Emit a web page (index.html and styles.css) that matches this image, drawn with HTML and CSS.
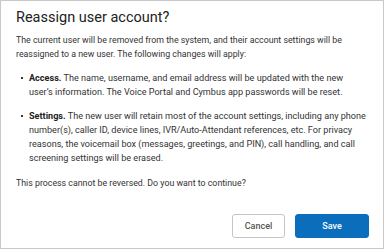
FILE: index.html
```html
<!DOCTYPE html>
<html lang="en">
<head>
    <meta charset="UTF-8">
    <meta name="viewport" content="width=device-width, initial-scale=1.0">
    <title>Reassign user account</title>
    <link rel="stylesheet" href="styles.css">
</head>
<body>
    <div class="dialog">
        <h1>Reassign user account?</h1>
        <p>The current user will be removed from the system, and their account settings will be reassigned to a new user. The following changes will apply:</p>
        <ul class="changes">
            <li><b>Access.</b> The name, username, and email address will be updated with the new user’s information. The Voice Portal and Cymbus app passwords will be reset.</li>
            <li><b>Settings.</b> The new user will retain most of the account settings, including any phone number(s), caller ID, device lines, IVR/Auto-Attendant references, etc. For privacy reasons, the voicemail box (messages, greetings, and PIN), call handling, and call screening settings will be erased.</li>
        </ul>
        <p>This process cannot be reversed. Do you want to continue?</p>
        <div class="actions">
            <button class="btn btn-cancel">Cancel</button>
            <button class="btn btn-save">Save</button>
        </div>
    </div>
</body>
</html>
```

FILE: styles.css
```css
* {
    margin: 0;
    padding: 0;
    box-sizing: border-box;
    font-family: Roboto, "Liberation Sans", sans-serif;
}

body {
    background-color: #fff;
    color: #333;
    width: 384px;
    height: 249px;
    overflow: hidden;
}

.dialog {
    width: 384px;
    height: 249px;
    border: 1px solid #c8c8c8;
    padding: 7px 14px 0 15px;
    display: flex;
    flex-direction: column;
}

h1 {
    font-size: 14.5px;
    font-weight: 400;
    color: #222;
    line-height: 20px;
    margin-bottom: 5px;
}

p {
    font-size: 8.8px;
    line-height: 14px;
}

.changes {
    list-style: none;
    margin: 10px 0 11px;
    padding-right: 3px;
}

.changes li {
    position: relative;
    font-size: 9.1px;
    line-height: 14px;
    padding-left: 13px;
    margin-bottom: 10px;
}

.changes li:last-child {
    margin-bottom: 0;
}

.changes li::before {
    content: "";
    position: absolute;
    left: 5px;
    top: 6px;
    width: 2px;
    height: 2px;
    background-color: #333;
}

.changes b {
    font-weight: 700;
    color: #222;
}

.actions {
    margin-top: auto;
    margin-bottom: 10px;
    display: flex;
    justify-content: flex-end;
    gap: 10px;
}

.btn {
    height: 24px;
    border-radius: 3px;
    font-size: 9px;
    font-weight: 500;
    cursor: pointer;
}

.btn-cancel {
    width: 53px;
    background-color: #fff;
    border: 1px solid #c4c4c4;
    color: #555;
}

.btn-save {
    width: 74px;
    background-color: #0a6ebd;
    border: 1px solid #0a6ebd;
    color: #fff;
}
```
